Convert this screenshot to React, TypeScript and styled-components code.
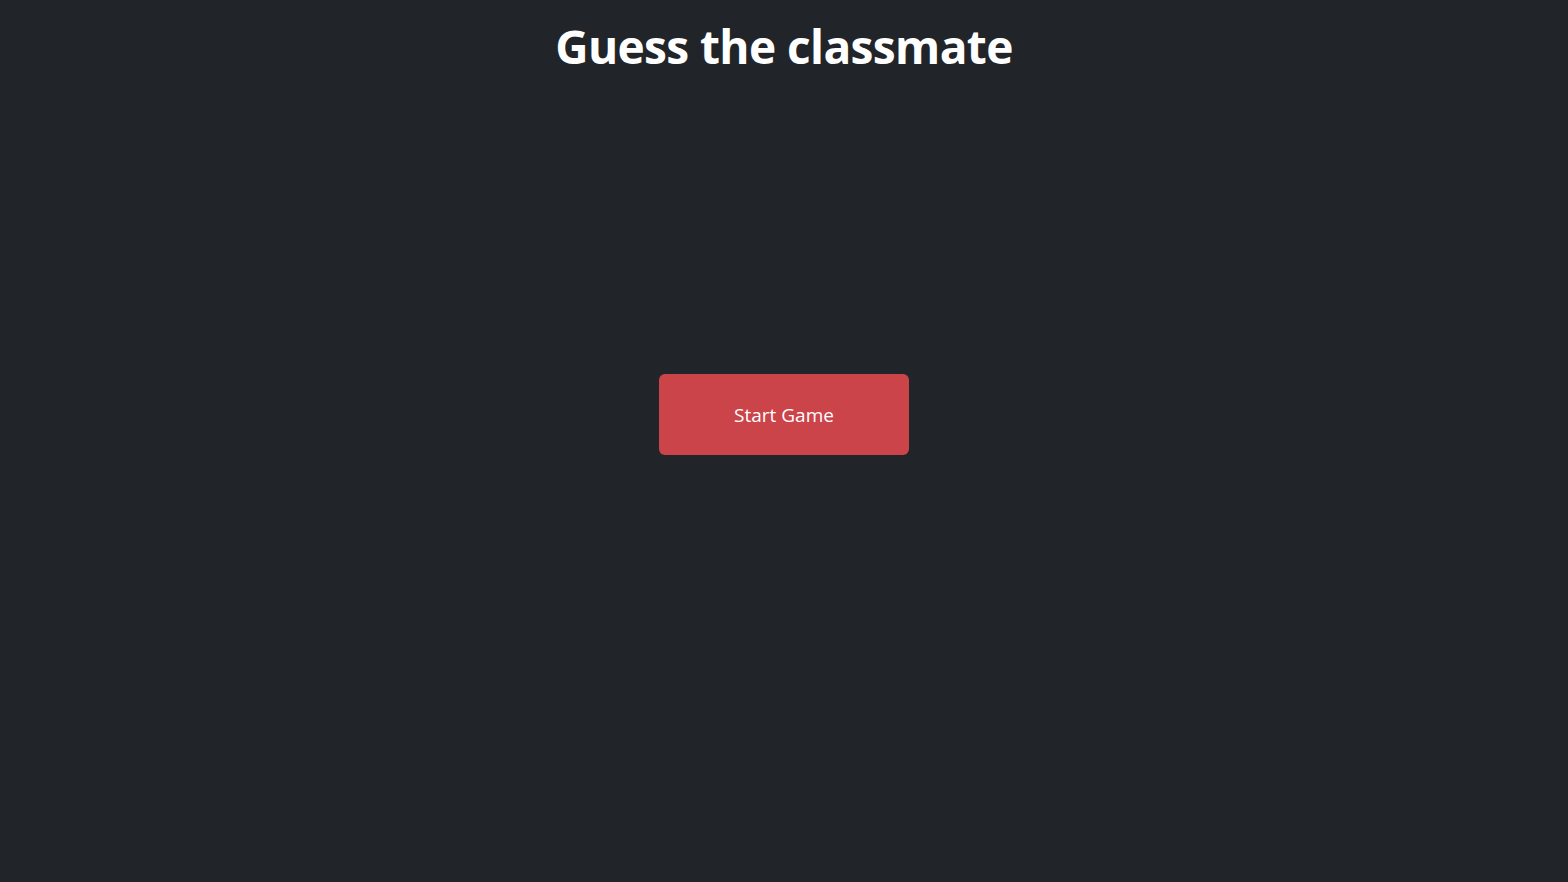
import styled, { createGlobalStyle } from "styled-components";

const GlobalStyle = createGlobalStyle`
  html, body {
    margin: 0;
    padding: 0;
    background-color: #212529;
    font-family: "Open Sans", "Noto Sans", sans-serif;
    color: #ffffff;
  }
`;

function App() {
  return (
    <>
      <GlobalStyle />
      <Page>
        <Title>Guess the classmate</Title>
        <Main>
          <StartButton type="button">Start Game</StartButton>
        </Main>
      </Page>
    </>
  );
}

const Page = styled.div`
  min-height: 100vh;
  display: flex;
  flex-direction: column;
  align-items: center;
`;

const Title = styled.h1`
  margin: 0;
  padding-top: 15px;
  font-size: 46px;
  line-height: 62px;
  font-weight: 700;
  letter-spacing: -0.6px;
  text-align: center;
`;

const Main = styled.main`
  display: flex;
  justify-content: center;
  padding-top: 297px;
`;

const StartButton = styled.button`
  width: 250px;
  height: 81px;
  border: none;
  border-radius: 6px;
  background-color: #cb444a;
  color: #ffffff;
  font-family: "Open Sans", "Noto Sans", sans-serif;
  font-size: 19px;
  cursor: pointer;
`;

export default App;
